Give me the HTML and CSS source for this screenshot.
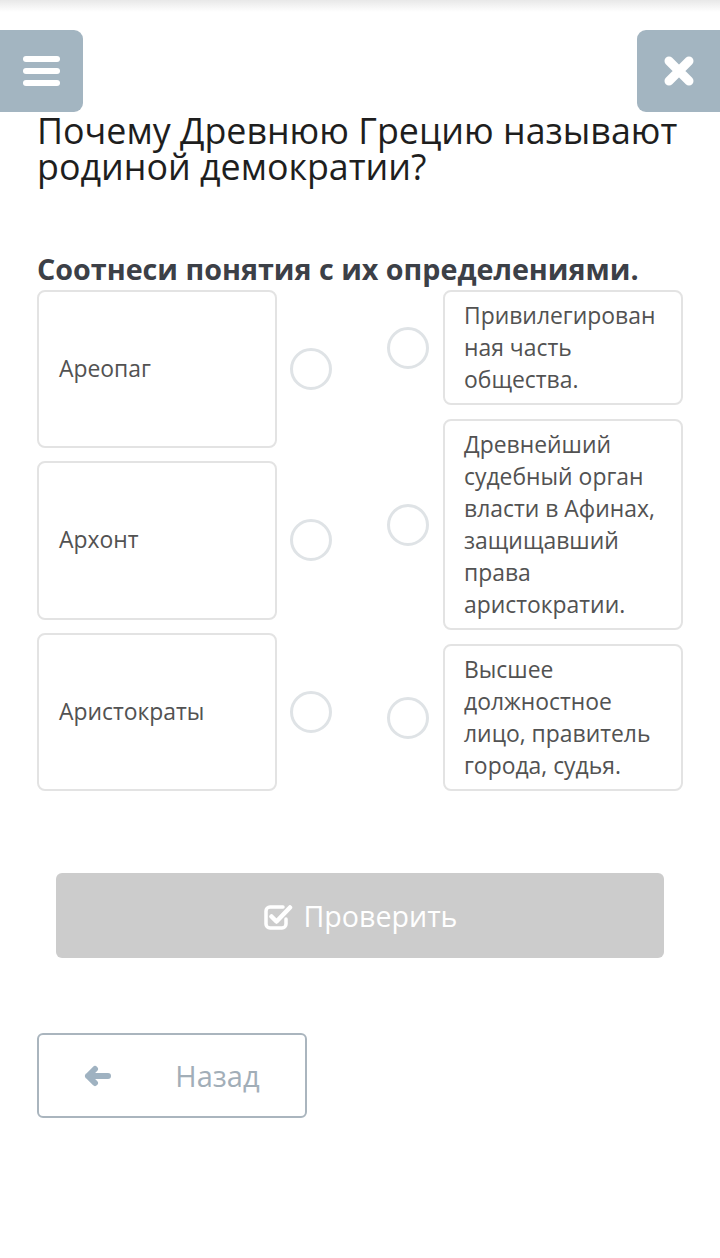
FILE: index.html
```html
<!DOCTYPE html>
<html lang="ru">
<head>
    <meta charset="UTF-8">
    <meta name="viewport" content="width=device-width, initial-scale=1.0">
    <title>Соотнеси понятия</title>
    <link rel="stylesheet" href="styles.css">
</head>
<body>
    <div class="top-shade"></div>

    <div class="nav">
        <button class="nav-button menu-button" aria-label="Меню">
            <svg width="37" height="30" viewBox="0 0 37 30">
                <rect x="0" y="0" width="37" height="6" rx="3" fill="#fff"/>
                <rect x="0" y="12" width="37" height="6" rx="3" fill="#fff"/>
                <rect x="0" y="24" width="37" height="6" rx="3" fill="#fff"/>
            </svg>
        </button>
        <button class="nav-button close-button" aria-label="Закрыть">
            <svg width="30" height="30" viewBox="0 0 30 30">
                <path d="M5 5 L25 25 M25 5 L5 25" stroke="#fff" stroke-width="9" stroke-linecap="round"/>
            </svg>
        </button>
    </div>

    <div class="content">
        <h1 class="question">Почему Древнюю Грецию называют родиной демократии?</h1>

        <h2 class="task">Соотнеси понятия с их определениями.</h2>

        <div class="match">
            <div class="match-column terms">
                <div class="match-item">
                    <div class="match-card">Ареопаг</div>
                    <span class="dot"></span>
                </div>
                <div class="match-item">
                    <div class="match-card">Архонт</div>
                    <span class="dot"></span>
                </div>
                <div class="match-item">
                    <div class="match-card">Аристократы</div>
                    <span class="dot"></span>
                </div>
            </div>

            <div class="match-column definitions">
                <div class="match-item">
                    <span class="dot"></span>
                    <div class="match-card">Привилегирован<wbr>ная часть общества.</div>
                </div>
                <div class="match-item">
                    <span class="dot"></span>
                    <div class="match-card">Древнейший судебный орган власти в Афинах, защищавший права аристократии.</div>
                </div>
                <div class="match-item">
                    <span class="dot"></span>
                    <div class="match-card">Высшее должностное лицо, правитель города, судья.</div>
                </div>
            </div>
        </div>

        <button class="check-button" disabled>
            <svg width="30" height="28" viewBox="0 0 30 28">
                <path d="M20 5 H7 A4 4 0 0 0 3 9 V22 A4 4 0 0 0 7 26 H19 A4 4 0 0 0 23 22 V17" fill="none" stroke="#fff" stroke-width="3.5" stroke-linecap="round"/>
                <path d="M8.5 14.5 L13.5 19.5 L27 5.5" fill="none" stroke="#fff" stroke-width="4.5" stroke-linecap="round" stroke-linejoin="round"/>
            </svg>
            <span>Проверить</span>
        </button>

        <button class="back-button">
            <svg width="28" height="22" viewBox="0 0 28 22">
                <path d="M11 4 L4 11 L11 18 M4 11 H24" fill="none" stroke="#9fb2c1" stroke-width="6" stroke-linecap="round" stroke-linejoin="round"/>
            </svg>
            <span>Назад</span>
        </button>
    </div>
</body>
</html>
```

FILE: styles.css
```css
body {
    font-family: "Open Sans", "Liberation Sans", Arial, sans-serif;
    margin: 0;
    background-color: #fff;
    color: #555;
}
.top-shade {
    height: 12px;
    background: linear-gradient(#e8e8e8, #fff);
}
.nav {
    display: flex;
    justify-content: space-between;
    margin-top: 18px;
}
.nav-button {
    width: 83px;
    height: 82px;
    border: none;
    padding: 0;
    background-color: #a3b5c1;
    display: flex;
    align-items: center;
    justify-content: center;
}
.menu-button {
    border-radius: 0 9px 9px 0;
}
.close-button {
    border-radius: 9px 0 0 9px;
}
.content {
    padding: 0 37px;
}
.question {
    margin: 0;
    font-size: 35.8px;
    font-weight: normal;
    line-height: 36px;
    color: #1e1e1e;
}
.task {
    margin: 67px 0 3px;
    font-size: 28.7px;
    font-weight: bold;
    line-height: 36px;
    color: #3c4047;
}
.match {
    display: flex;
    justify-content: space-between;
}
.match-column {
    display: flex;
    flex-direction: column;
}
.terms {
    gap: 13px;
}
.definitions {
    gap: 14px;
}
.match-item {
    display: flex;
    align-items: center;
}
.terms .match-item {
    flex: 1;
}
.match-card {
    box-sizing: border-box;
    width: 240px;
    border: 2px solid #e3e3e3;
    border-radius: 8px;
    font-size: 22.9px;
    line-height: 32px;
    color: #525252;
}
.terms .match-card {
    align-self: stretch;
    display: flex;
    align-items: center;
    padding: 0 20px;
}
.definitions .match-card {
    padding: 8px 16px 7px 19px;
    overflow-wrap: break-word;
}
.dot {
    box-sizing: border-box;
    width: 42px;
    height: 42px;
    border: 3px solid #dfe3e6;
    border-radius: 50%;
}
.terms .dot {
    margin-left: 13px;
}
.definitions .dot {
    margin-right: 14px;
}
.check-button {
    display: flex;
    align-items: center;
    justify-content: center;
    gap: 11px;
    width: calc(100% - 38px);
    height: 85px;
    margin: 82px 19px 0;
    border: none;
    border-radius: 6px;
    background-color: #cccccc;
    color: #fff;
    font-family: inherit;
    font-size: 28.6px;
}
.back-button {
    display: flex;
    align-items: center;
    justify-content: center;
    gap: 63px;
    width: 270px;
    height: 85px;
    margin-top: 75px;
    border: 2px solid #aab5be;
    border-radius: 6px;
    background-color: #fff;
    color: #a2aeb8;
    font-family: inherit;
    font-size: 29px;
}
```
